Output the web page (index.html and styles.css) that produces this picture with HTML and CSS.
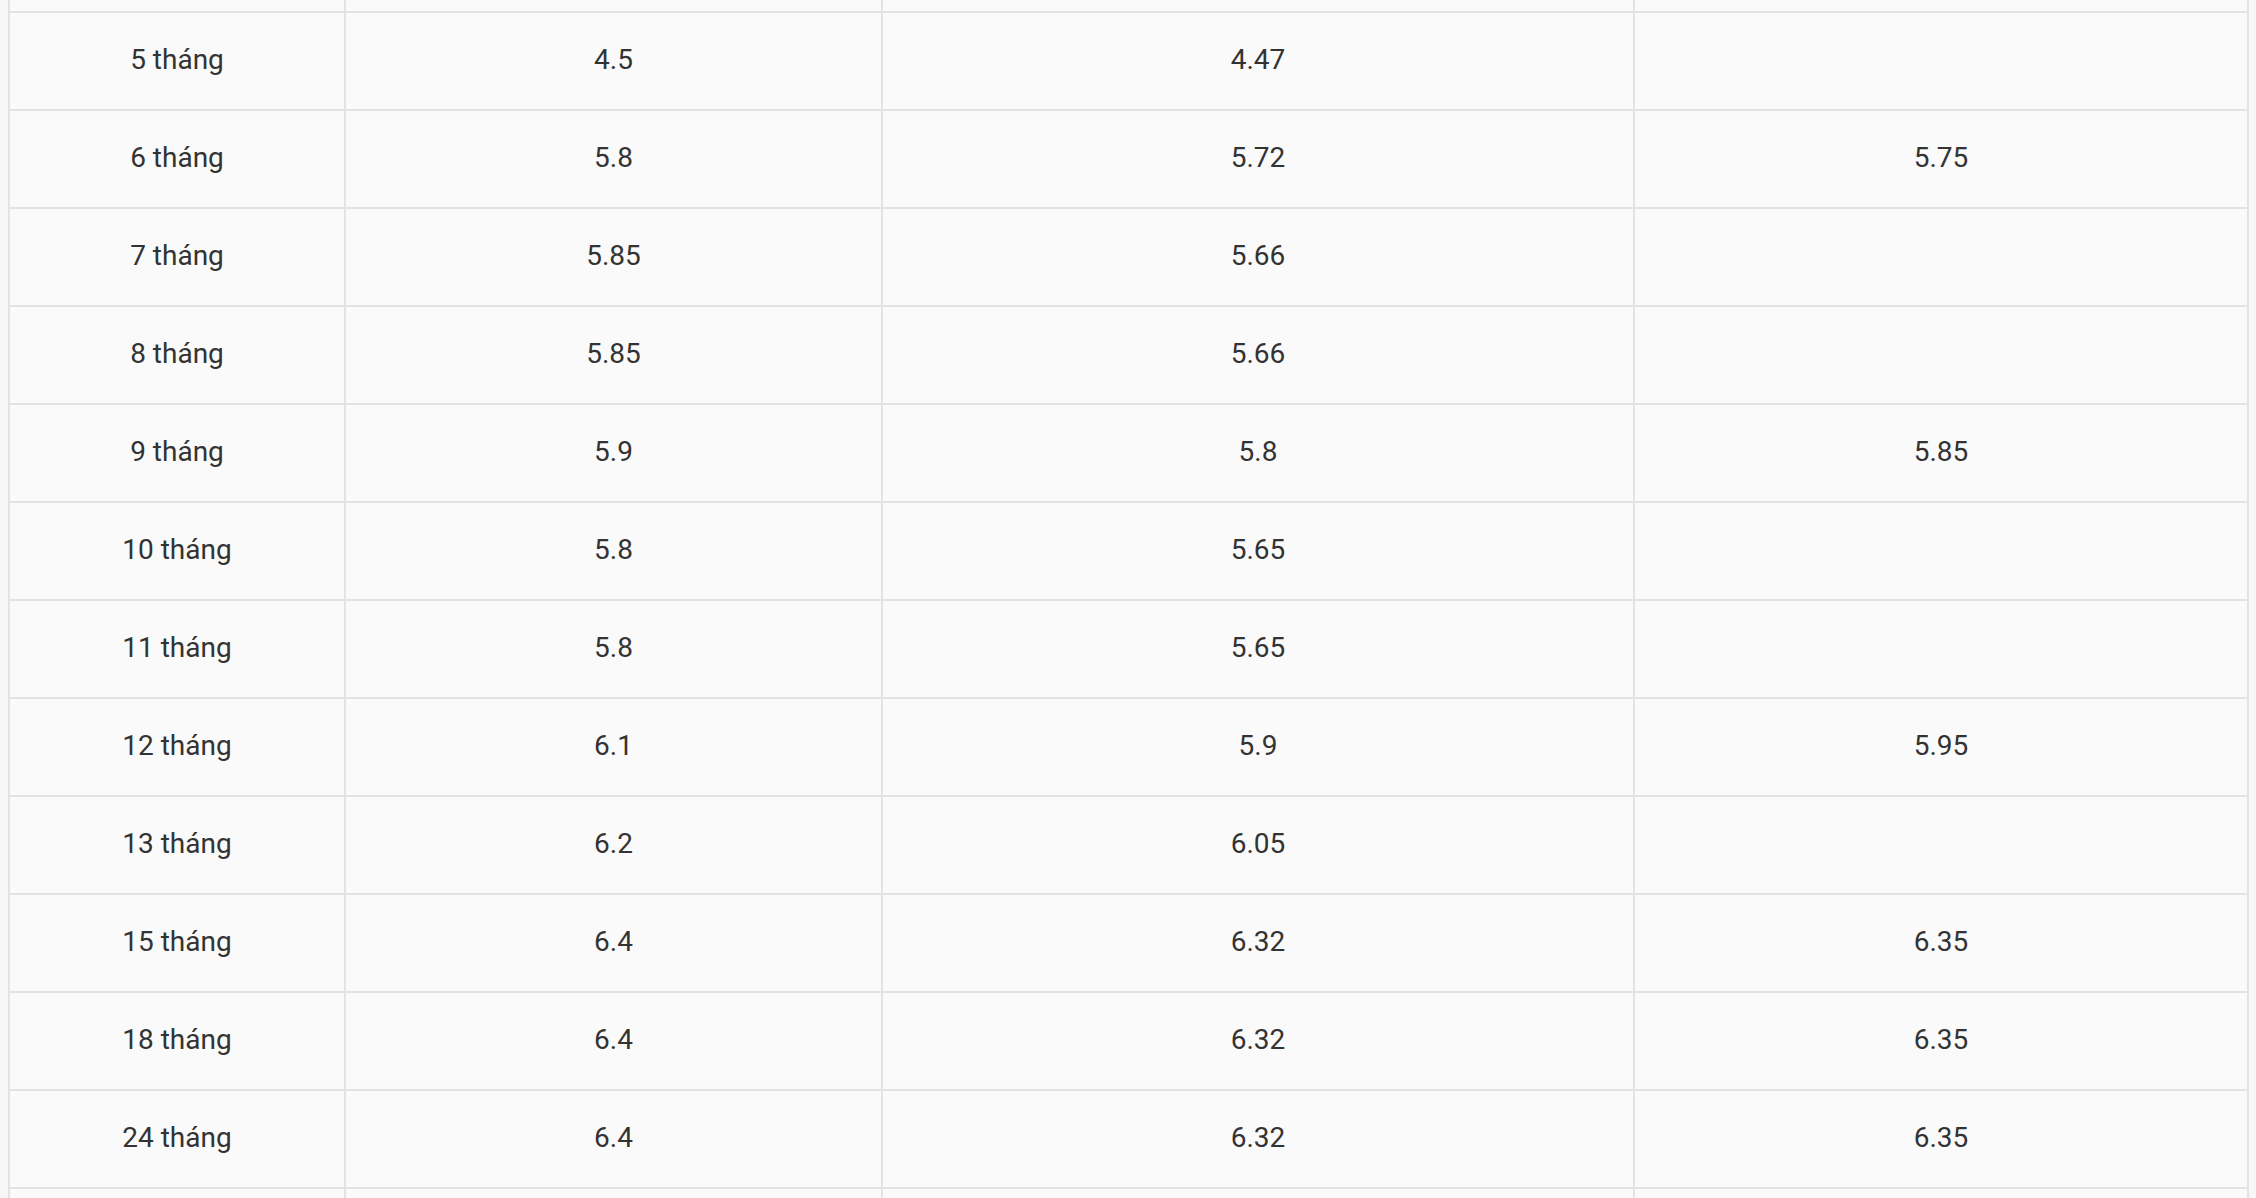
FILE: index.html
```html
<!DOCTYPE html>
<html lang="vi">
<head>
<meta charset="utf-8">
<title>Lãi suất</title>
<link rel="stylesheet" href="styles.css">
</head>
<body>
<div class="table">
  <div class="row row-top"><div class="cell"></div><div class="cell"></div><div class="cell"></div><div class="cell"></div></div>
  <div class="row"><div class="cell">5 tháng</div><div class="cell">4.5</div><div class="cell">4.47</div><div class="cell"></div></div>
  <div class="row"><div class="cell">6 tháng</div><div class="cell">5.8</div><div class="cell">5.72</div><div class="cell">5.75</div></div>
  <div class="row"><div class="cell">7 tháng</div><div class="cell">5.85</div><div class="cell">5.66</div><div class="cell"></div></div>
  <div class="row"><div class="cell">8 tháng</div><div class="cell">5.85</div><div class="cell">5.66</div><div class="cell"></div></div>
  <div class="row"><div class="cell">9 tháng</div><div class="cell">5.9</div><div class="cell">5.8</div><div class="cell">5.85</div></div>
  <div class="row"><div class="cell">10 tháng</div><div class="cell">5.8</div><div class="cell">5.65</div><div class="cell"></div></div>
  <div class="row"><div class="cell">11 tháng</div><div class="cell">5.8</div><div class="cell">5.65</div><div class="cell"></div></div>
  <div class="row"><div class="cell">12 tháng</div><div class="cell">6.1</div><div class="cell">5.9</div><div class="cell">5.95</div></div>
  <div class="row"><div class="cell">13 tháng</div><div class="cell">6.2</div><div class="cell">6.05</div><div class="cell"></div></div>
  <div class="row"><div class="cell">15 tháng</div><div class="cell">6.4</div><div class="cell">6.32</div><div class="cell">6.35</div></div>
  <div class="row"><div class="cell">18 tháng</div><div class="cell">6.4</div><div class="cell">6.32</div><div class="cell">6.35</div></div>
  <div class="row"><div class="cell">24 tháng</div><div class="cell">6.4</div><div class="cell">6.32</div><div class="cell">6.35</div></div>
  <div class="row row-bottom"><div class="cell"></div><div class="cell"></div><div class="cell"></div><div class="cell"></div></div>
</div>
</body>
</html>
```
FILE: styles.css
```css
html, body {
  margin: 0;
  padding: 0;
  background: #f7f7f7;
  height: 1198px;
  overflow: hidden;
}
.table {
  margin-left: 8px;
  width: 2241px;
  background: #fafafa;
  font-family: Roboto, "Liberation Sans", sans-serif;
  font-size: 28px;
  color: #333333;
}
.row {
  display: grid;
  grid-template-columns: 338px 537px 752px 614px;
  height: 98px;
}
.cell {
  box-sizing: border-box;
  border-right: 2px solid #e3e3e3;
  border-bottom: 2px solid #e3e3e3;
  padding-bottom: 3px;
  display: flex;
  align-items: center;
  justify-content: center;
}
.cell:first-child {
  border-left: 2px solid #e3e3e3;
}
.row-top {
  height: 13px;
}
.row-top .cell,
.row-bottom .cell {
  padding-bottom: 0;
}
.row-bottom {
  height: 20px;
}
.row-bottom .cell {
  border-bottom: none;
}
```
